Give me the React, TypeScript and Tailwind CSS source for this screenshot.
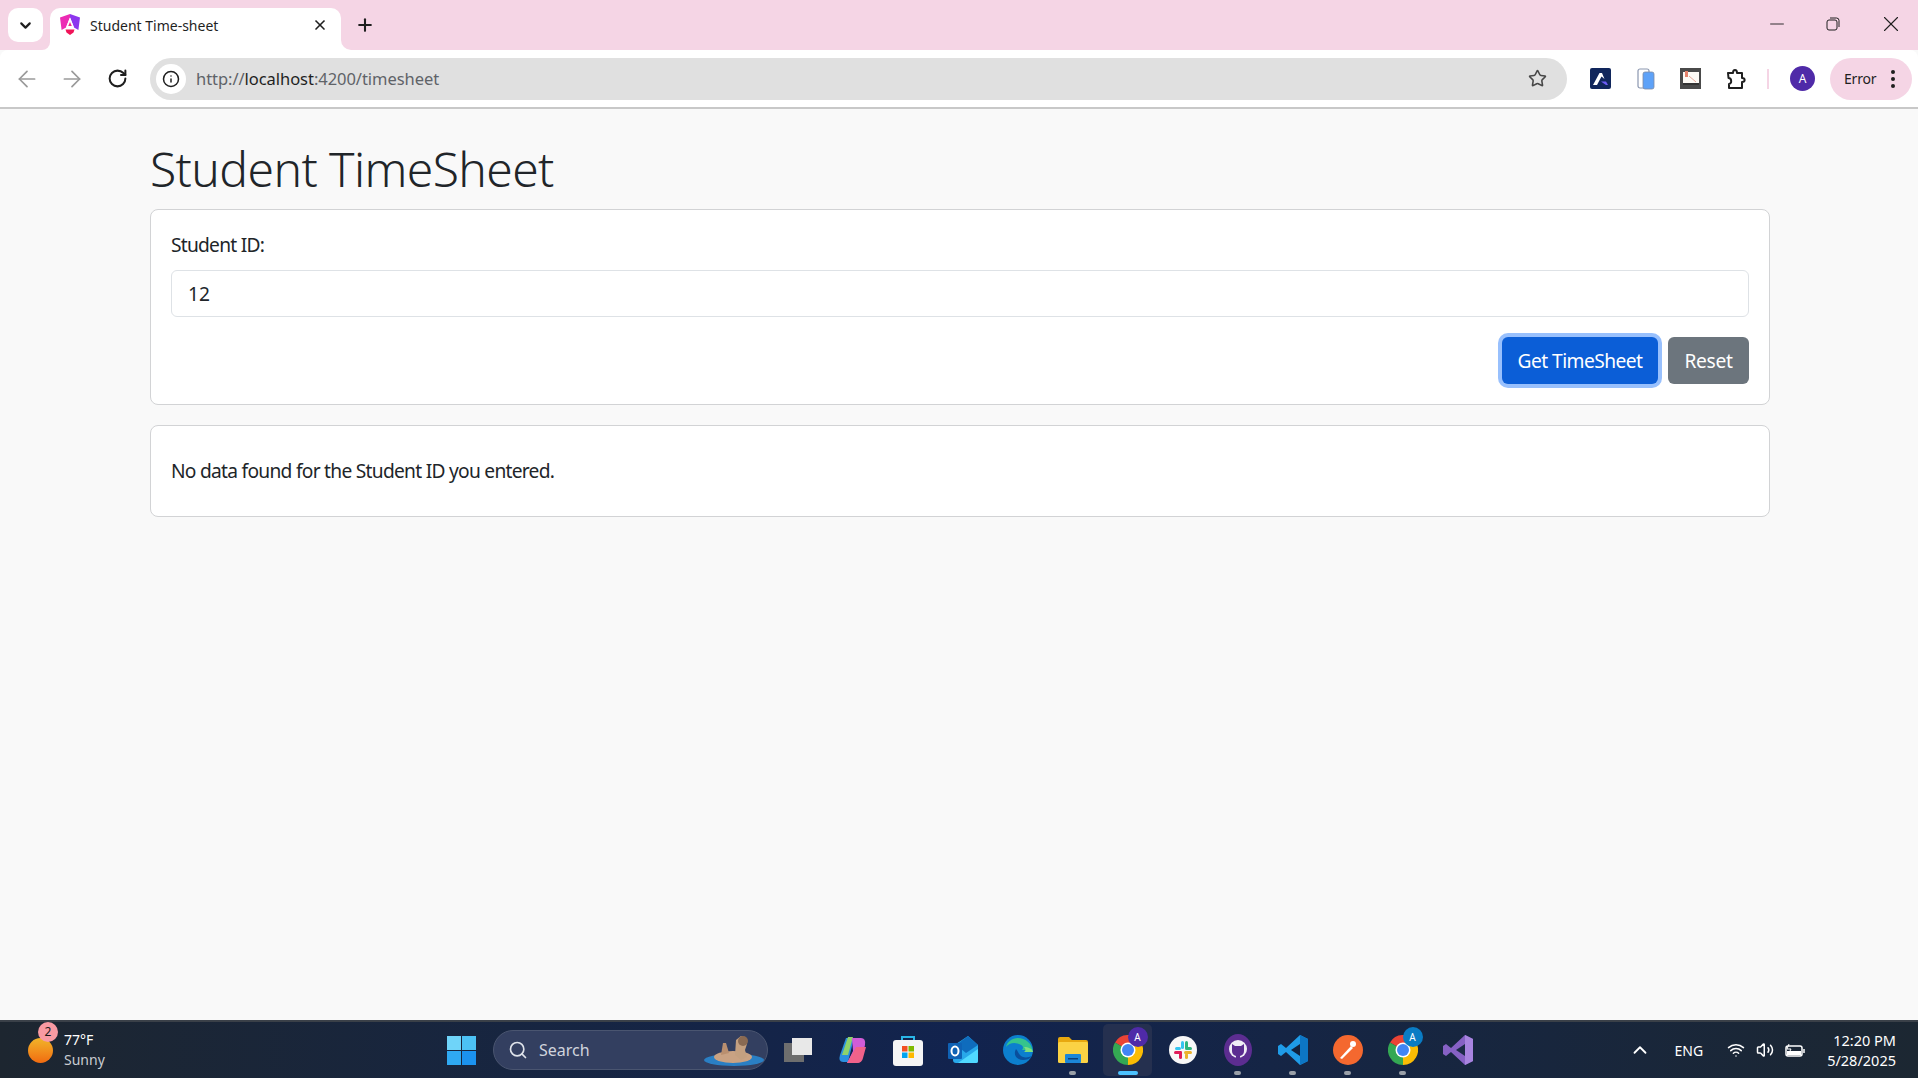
import { ArrowLeft, ArrowRight, ChevronDown, ChevronUp, Info, Minus, Plus, RotateCw, Search, Star, Volume2, Wifi, X } from 'lucide-react'

const sans = 'font-["Noto_Sans",sans-serif]'

function AngularLogo() {
  return (
    <svg width="20" height="22" viewBox="0 0 20 22" aria-hidden>
      <path d="M10 0 0 3.5 1.6 16 6 13.5 8.7 6.5 10 3.5Z" fill="#ec2bb4" />
      <path d="M10 0 20 3.5 18.4 16 14 13.5 11.3 6.5 10 3.5Z" fill="#8d36ee" />
      <path d="M10 3.5 14 13.5H6Z" fill="#fff" />
      <path d="M10 8 11.8 12H8.2Z" fill="#ee2f8c" />
      <path d="M5.5 15.5h9l-1 3L10 21l-3.5-2.5Z" fill="#f01458" />
    </svg>
  )
}

function ExtAdmin() {
  return (
    <svg width="21" height="21" viewBox="0 0 21 21" aria-hidden>
      <rect width="21" height="21" rx="2" fill="#10265c" />
      <path d="M3 17 9.5 5h2.5l2.5 6-3-2.5L7 17Z" fill="#fff" />
      <path d="M11 13.5 16 17h2l-2-3.5Z" fill="#6d5cf5" />
    </svg>
  )
}

function ExtPages() {
  return (
    <svg width="18" height="22" viewBox="0 0 18 22" aria-hidden>
      <rect x="1" y="1" width="11" height="19" rx="2" fill="#fff" stroke="#8b97b0" strokeWidth="1.2" />
      <rect x="6" y="4" width="11" height="17" rx="2" fill="#5ea2f8" stroke="#7d8ba5" strokeWidth="0.8" />
    </svg>
  )
}

function ExtScreen() {
  return (
    <svg width="21" height="21" viewBox="0 0 21 21" aria-hidden>
      <rect width="21" height="21" fill="#4a4a4a" />
      <rect x="3" y="4" width="16" height="13" fill="#fdfaf5" />
      <rect x="3" y="15" width="16" height="2" fill="#333" />
      <rect x="5" y="3" width="3" height="6" fill="#e5836c" />
      <path d="m9 8 7 6" stroke="#e5a89a" strokeWidth="1" />
    </svg>
  )
}

function Puzzle() {
  return (
    <svg width="22" height="22" viewBox="0 0 22 22" fill="none" stroke="#1f1f1f" strokeWidth="2" strokeLinejoin="round" aria-hidden>
      <path d="M3 5h5c0-4 4-4 4 0h5v5c3.5 0 3.5 4 0 4v6H4v-4c3 0 3-6-.5-6Z" />
    </svg>
  )
}

function TaskIcon({ children, pip, active }: { children: React.ReactNode; pip?: boolean; active?: boolean }) {
  return (
    <div className="relative flex h-[52px] w-[55px] flex-none items-center justify-center">
      {active && <span className="absolute inset-x-[3px] inset-y-0 rounded-[5px] bg-[#25304f]" />}
      <span className="relative flex">{children}</span>
      {pip && <span className="absolute bottom-[1px] left-[24px] h-[4px] w-[7px] rounded-full bg-[#9aa0a8]" />}
      {active && <span className="absolute bottom-[1px] left-[18px] h-[4px] w-[20px] rounded-full bg-[#4cc2ff]" />}
    </div>
  )
}

function ChromeIcon({ badge, badgeColor }: { badge: string; badgeColor: string }) {
  return (
    <div className="relative h-[30px] w-[30px]">
      <svg width="30" height="30" viewBox="0 0 30 30" aria-hidden>
        <path d="M15 15 2 7.5A15 15 0 0 1 28 7.5Z" fill="#ea4335" />
        <path d="M15 15 28 7.5A15 15 0 0 1 15 30Z" fill="#fbbc04" />
        <path d="M15 15 15 30A15 15 0 0 1 2 7.5Z" fill="#34a853" />
        <circle cx="15" cy="15" r="7.5" fill="#fff" />
        <circle cx="15" cy="15" r="6" fill="#4285f4" />
      </svg>
      <span className={`absolute -right-[5px] -top-[8px] flex h-[20px] w-[20px] items-center justify-center rounded-full text-[10px] text-white ${badgeColor}`}>
        {badge}
      </span>
    </div>
  )
}

export default function App() {
  return (
    <div className={`flex h-screen w-full flex-col overflow-hidden bg-[#f9f9f9] ${sans}`}>
      {/* tab strip */}
      <div className="flex h-[50px] flex-none items-end bg-[#f5d5e5] pl-[8px]">
        <div className="mb-[8px] flex h-[34px] w-[35px] items-center justify-center rounded-[10px] bg-white">
          <ChevronDown size={17} strokeWidth={3} className="text-[#1f1f1f]" />
        </div>
        <div className="relative ml-[7px] flex h-[42px] w-[291px] items-center rounded-t-[10px] bg-white pb-[8px] pl-[10px] pr-[13px]">
          <AngularLogo />
          <span className="ml-[10px] flex-1 text-[14px] text-[#1f1f1f]">Student Time-sheet</span>
          <X size={16} strokeWidth={2.5} className="text-[#1f1f1f]" />
          <span className="absolute -left-[8px] bottom-0 h-[8px] w-[8px] bg-white" />
          <span className="absolute -left-[8px] bottom-0 h-[8px] w-[8px] rounded-br-[8px] bg-[#f5d5e5]" />
          <span className="absolute -right-[10px] bottom-0 h-[10px] w-[10px] bg-white" />
          <span className="absolute -right-[10px] bottom-0 h-[10px] w-[10px] rounded-bl-[10px] bg-[#f5d5e5]" />
        </div>
        <Plus size={20} strokeWidth={2.5} className="mb-[15px] ml-[14px] text-[#1f1f1f]" />
        <div className="mb-[13px] ml-auto flex items-center text-[#1f1f1f]">
          <div className="flex w-[50px] justify-center"><Minus size={22} strokeWidth={1} /></div>
          <div className="flex w-[62px] justify-center">
            <svg width="14" height="14" viewBox="0 0 14 14" fill="none" stroke="#1f1f1f" aria-hidden>
              <rect x="1" y="3" width="10" height="10" rx="2" />
              <path d="M4 1h6.5A2.5 2.5 0 0 1 13 3.5V10" />
            </svg>
          </div>
          <div className="flex w-[54px] justify-center"><X size={26} strokeWidth={1} /></div>
        </div>
      </div>

      {/* toolbar */}
      <div className="flex h-[57px] flex-none items-center rounded-t-[8px] bg-white pl-[14px]">
        <ArrowLeft size={26} strokeWidth={1.6} className="text-[#9a9a9a]" />
        <ArrowRight size={26} strokeWidth={1.6} className="ml-[19px] text-[#9a9a9a]" />
        <RotateCw size={21} strokeWidth={2.3} className="ml-[22px] text-[#1f1f1f]" />
        <div className="ml-[22px] flex h-[42px] w-[1417px] flex-none items-center rounded-full bg-[#e0e0e0] pl-[6px] pr-[20px]">
          <span className="flex h-[30px] w-[30px] items-center justify-center rounded-full bg-white">
            <Info size={18} strokeWidth={2} className="text-[#1f1f1f]" />
          </span>
          <span className="ml-[10px] flex-1 pt-[1px] text-[16.5px] tracking-[-0.05px] text-[#5f6368]">
            http://<span className="text-[#1f1f1f]">localhost</span>:4200/timesheet
          </span>
          <Star size={19} strokeWidth={2} className="text-[#474747]" />
        </div>
        <div className="ml-[11px] flex items-center">
          <div className="flex w-[45px] justify-center"><ExtAdmin /></div>
          <div className="flex w-[45px] justify-center"><ExtPages /></div>
          <div className="flex w-[45px] justify-center"><ExtScreen /></div>
          <div className="flex w-[45px] justify-center"><Puzzle /></div>
          <span className="ml-[9px] h-[20px] w-[2px] bg-[#f5d5e5]" />
          <span className="ml-[21px] flex h-[25px] w-[25px] items-center justify-center rounded-full bg-[#4f2aa8] text-[12px] text-white">A</span>
          <div className="ml-[15px] flex h-[42px] w-[82px] items-center justify-between rounded-full bg-[#f5d5e5] pl-[14px] pr-[17px] text-[14px] tracking-[-0.2px] text-[#1f1f1f]">
            Error
            <span className="flex flex-col gap-[3px]">
              <span className="h-[4px] w-[4px] rounded-full bg-[#1f1f1f]" />
              <span className="h-[4px] w-[4px] rounded-full bg-[#1f1f1f]" />
              <span className="h-[4px] w-[4px] rounded-full bg-[#1f1f1f]" />
            </span>
          </div>
        </div>
      </div>
      <div className="h-[2px] flex-none bg-[#c8c8c8]" />

      {/* page */}
      <main className="min-h-0 flex-1 pl-[150px] pr-[148px] text-[#212529]">
        <h1 className="pt-[31px] text-[48px] font-light leading-[58px] tracking-[-0.6px]">Student TimeSheet</h1>
        <section className="mt-[11px] h-[196px] rounded-[8px] border border-[#d2d3d5] bg-white px-[20px] pt-[20px]">
          <label className="block pt-[1px] text-[19.2px] leading-[28px] tracking-[-0.75px]">Student ID:</label>
          <div className="mt-[11px] flex h-[47px] items-center rounded-[6px] border border-[#dee2e6] px-[16px] pt-[2px] text-[19.2px]">12</div>
          <div className="mt-[20px] flex justify-end gap-[10px]">
            <button className="h-[47px] w-[156px] rounded-[6px] bg-[#0b5ed7] pt-[2px] text-[19.2px] tracking-[-0.55px] text-white shadow-[0_0_0_4px_#98c0fd]">Get TimeSheet</button>
            <button className="h-[47px] w-[81px] rounded-[6px] bg-[#6c757d] pt-[2px] text-[19.2px] tracking-[-0.3px] text-white">Reset</button>
          </div>
        </section>
        <section className="mt-[20px] flex h-[92px] items-center rounded-[8px] border border-[#d2d3d5] bg-white px-[20px] text-[19.2px] tracking-[-0.73px]">
          No data found for the Student ID you entered.
        </section>
      </main>

      {/* taskbar */}
      <footer className="flex h-[58px] flex-none items-center border-t-2 border-[#3a4048] bg-gradient-to-r from-[#1d2630] via-[#12234e] to-[#1c2732] text-white">
        <div className="relative ml-[28px] flex w-[88px] flex-none items-center">
          <span className="h-[25px] w-[25px] rounded-full bg-gradient-to-b from-[#f0b429] to-[#f06a10]" />
          <span className="absolute left-[10px] -top-[8px] flex h-[20px] w-[20px] items-center justify-center rounded-full bg-[#f99aa2] text-[12px] text-[#1a1a1a]">2</span>
          <div className="ml-[11px] text-[14px] leading-[20px]">
            <div>77°F</div>
            <div className="text-[#c9ccd1]">Sunny</div>
          </div>
        </div>
        <div className="ml-[328px] flex h-[52px] w-[34px] flex-none flex-wrap content-center justify-center gap-[1px]">
          <span className="h-[14px] w-[14px] bg-[#6fd4f9]" />
          <span className="h-[14px] w-[14px] bg-[#4cc2f5]" />
          <span className="h-[14px] w-[14px] bg-[#2fa9f2]" />
          <span className="h-[14px] w-[14px] bg-[#1b92ef]" />
        </div>
        <div className="ml-[15px] flex h-[40px] w-[275px] flex-none items-center rounded-full border border-[#4a5570] bg-[#333f60] pl-[14px] pr-[2px]">
          <Search size={20} className="text-[#dfe3ea]" />
          <span className="ml-[11px] flex-1 text-[16px] text-[#d0d4dc]">Search</span>
          <svg width="62" height="34" viewBox="0 0 62 34" aria-hidden>
            <ellipse cx="31" cy="27" rx="30" ry="6" fill="#2a7fc4" />
            <ellipse cx="30" cy="24" rx="19" ry="6" fill="#c9a283" />
            <path d="M18 22 20 10l3 0 3 10Z" fill="#b98f6f" />
            <path d="M32 22 33 7l5-4 5 2 1 6-2 6 2 7-6 3Z" fill="#c4a080" />
            <circle cx="40" cy="8" r="5" fill="#8a6a52" />
          </svg>
        </div>
        <div className="ml-[2px] flex flex-none items-center">
          <TaskIcon>
            <div className="relative h-[24px] w-[28px]">
              <span className="absolute left-0 top-[5px] h-[19px] w-[20px] bg-[#6e6e6e]" />
              <span className="absolute right-0 top-0 h-[17px] w-[20px] bg-[#e8e8e8]" />
            </div>
          </TaskIcon>
          <TaskIcon>
            <svg width="30" height="30" viewBox="0 0 30 30" aria-hidden>
              <path d="M8 3h8l-6 24H5Q0 27 2 20Z" fill="#2a8fe0" />
              <path d="M10 2h5l-5 18H4Z" fill="#8fd26a" />
              <path d="M14 3h9q5 0 4 7l-3 13q-1 5-6 5H9l6-12Z" fill="#d05cd8" />
              <path d="M18 12h10l-3 11q-1 5-6 5H9Z" fill="#f0628a" />
            </svg>
          </TaskIcon>
          <TaskIcon>
            <svg width="30" height="32" viewBox="0 0 30 32" aria-hidden>
              <path d="M9 8V3h12v5" fill="none" stroke="#29b6e8" strokeWidth="2" />
              <rect y="6" width="30" height="26" rx="3" fill="#f5f5f5" />
              <rect x="9" y="12" width="5.5" height="5.5" fill="#f25022" />
              <rect x="15.5" y="12" width="5.5" height="5.5" fill="#7fba00" />
              <rect x="9" y="18.5" width="5.5" height="5.5" fill="#00a4ef" />
              <rect x="15.5" y="18.5" width="5.5" height="5.5" fill="#ffb900" />
            </svg>
          </TaskIcon>
          <TaskIcon>
            <svg width="30" height="30" viewBox="0 0 30 30" aria-hidden>
              <path d="M5 11 20 1l10 9v16q0 2-2 2H8q-3 0-3-3Z" fill="#28a8ea" />
              <path d="M8 10 20 1l10 9-12 8Z" fill="#0f6cbd" />
              <path d="M10 28 30 14v12q0 2-2 2Z" fill="#50d9ff" />
              <rect y="8" width="14" height="16" rx="1" fill="#0f62b5" />
              <ellipse cx="7" cy="16" rx="3.5" ry="4.5" fill="none" stroke="#fff" strokeWidth="2" />
            </svg>
          </TaskIcon>
          <TaskIcon>
            <svg width="30" height="30" viewBox="0 0 30 30" aria-hidden>
              <circle cx="15" cy="15" r="15" fill="#0c7fce" />
              <path d="M30 17C29 8 22 3 15 3 9 3 4 7 3 12c3-4 8-5 13-3 4 1 5 4 3 6h11Z" fill="#35c48d" />
              <path d="M13 14c-3 5 0 11 7 11 3 0 7-1 9-4-4 2-10 2-12-1-2-2-2-4-4-6Z" fill="#0a4f9c" />
              <path d="M30 17c0-3-5-5-9-5 2 2 2 4 0 5Z" fill="#7ee07e" />
            </svg>
          </TaskIcon>
          <TaskIcon pip>
            <svg width="30" height="30" viewBox="0 0 30 30" aria-hidden>
              <path d="M0 4q0-2 2-2h9l3 3h14q2 0 2 2v5H0Z" fill="#e8a80f" />
              <rect y="7" width="30" height="21" rx="1.5" fill="#fbd244" />
              <rect x="7" y="19" width="16" height="9" rx="1" fill="#1c86d8" />
              <rect x="10" y="23" width="10" height="1.5" fill="#0c3f7a" />
            </svg>
          </TaskIcon>
          <TaskIcon active>
            <ChromeIcon badge="A" badgeColor="bg-[#4f2aa8]" />
          </TaskIcon>
          <TaskIcon>
            <svg width="28" height="28" viewBox="0 0 28 28" aria-hidden>
              <circle cx="14" cy="14" r="14" fill="#f8f8f8" />
              <rect x="12" y="5" width="3" height="8" rx="1.5" fill="#36c5f0" />
              <rect x="6" y="11" width="6" height="3" rx="1.5" fill="#36c5f0" />
              <rect x="16" y="5" width="3" height="8" rx="1.5" fill="#2eb67d" />
              <rect x="16" y="11" width="7" height="3" rx="1.5" fill="#2eb67d" />
              <rect x="15" y="15" width="8" height="3" rx="1.5" fill="#ecb22e" />
              <rect x="16" y="17" width="3" height="6" rx="1.5" fill="#ecb22e" />
              <rect x="5" y="15" width="8" height="3" rx="1.5" fill="#e01e5a" />
              <rect x="10" y="15" width="3" height="8" rx="1.5" fill="#e01e5a" />
            </svg>
          </TaskIcon>
          <TaskIcon pip>
            <svg width="28" height="32" viewBox="0 0 28 32" aria-hidden>
              <ellipse cx="14" cy="16" rx="14" ry="16" fill="#5c2d91" />
              <circle cx="14" cy="15" r="9" fill="#f0edf5" />
              <path d="M8 10l3 2h6l3-2v7q0 4-4 5v4h-4v-4q-4-1-4-5Z" fill="#5c2d91" />
            </svg>
          </TaskIcon>
          <TaskIcon pip>
            <svg width="30" height="32" viewBox="0 0 30 32" aria-hidden>
              <path d="M22 1 30 5v22l-8 4L8 18l-5 4-3-2V12l3-2 5 4Z" fill="#1f9ce8" />
              <path d="M22 1v30l8-4V5Z" fill="#0d76c4" />
              <path d="M22 10 13 16l9 6Z" fill="#12233f" />
            </svg>
          </TaskIcon>
          <TaskIcon pip>
            <svg width="30" height="30" viewBox="0 0 30 30" aria-hidden>
              <circle cx="15" cy="15" r="15" fill="#f4682f" />
              <path d="M7 23 18 11l2 2L9 24Z" fill="#fff" />
              <circle cx="20" cy="9" r="3" fill="#fff" />
            </svg>
          </TaskIcon>
          <TaskIcon pip>
            <ChromeIcon badge="A" badgeColor="bg-[#0a7cc4]" />
          </TaskIcon>
          <TaskIcon>
            <svg width="30" height="32" viewBox="0 0 30 32" aria-hidden>
              <path d="M22 1 30 5v22l-8 4L8 18l-5 4-3-2V12l3-2 5 4Z" fill="#8661c5" />
              <path d="M22 1v30l8-4V5Z" fill="#a884e0" />
              <path d="M22 10 13 16l9 6Z" fill="#1c2a48" />
            </svg>
          </TaskIcon>
        </div>

        <div className="ml-auto flex flex-none items-center pr-[22px]">
          <ChevronUp size={22} strokeWidth={2} />
          <span className="ml-[24px] text-[14px]">ENG</span>
          <Wifi size={18} className="ml-[24px]" />
          <Volume2 size={18} className="ml-[11px]" />
          <svg width="20" height="14" viewBox="0 0 20 14" fill="none" stroke="#fff" strokeWidth="1.5" className="ml-[11px]" aria-hidden>
            <rect x="1" y="3" width="16" height="10" rx="2" />
            <path d="M19 6v4" />
            <rect x="2" y="8" width="14" height="4" fill="#fff" stroke="none" />
            <path d="M4 1 2 6h4l-2 4" strokeWidth="1" />
          </svg>
          <div className="ml-[22px] text-right text-[14.5px] leading-[20px]">
            <div>12:20 PM</div>
            <div>5/28/2025</div>
          </div>
        </div>
      </footer>
    </div>
  )
}
